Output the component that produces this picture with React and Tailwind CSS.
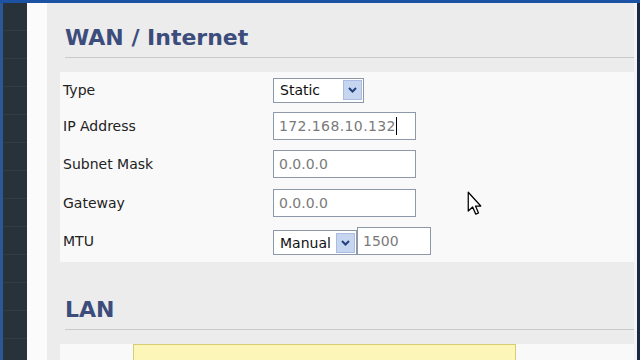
import React from 'react';

const font = { fontFamily: '"DejaVu Sans", Verdana, sans-serif' };

function Chevron() {
  return (
    <svg width="9" height="6" viewBox="0 0 9 6" fill="none">
      <path d="M1 1 L4.5 4.5 L8 1" stroke="#23407e" strokeWidth="2" />
    </svg>
  );
}

function Select({ value, width }) {
  return (
    <div className={`flex items-center h-[25px] bg-white border border-[#8d99a8] ${width}`}>
      <span className="flex-1 pl-[6px] text-[14px] text-[#111] leading-none">{value}</span>
      <span className="mr-[1px] w-[19px] h-[20px] flex items-center justify-center bg-[#c6d6f1] border border-[#a9bde2]">
        <Chevron />
      </span>
    </div>
  );
}

function TextInput({ value, width = 'w-[143px]', caret = false, wide = false }) {
  return (
    <div className={`flex items-center h-[28px] bg-white border border-[#8d99a8] ${width}`}>
      <span className={`pl-[5px] text-[14px] text-[#7a7a7a] leading-none ${wide ? 'tracking-[0.4px]' : ''}`}>{value}</span>
      {caret && <span className="w-px h-[18px] bg-black" />}
    </div>
  );
}

function Row({ label, h, children }) {
  return (
    <div className={`flex items-center ${h}`}>
      <div className="w-[210px] text-[14px] text-[#222]">{label}</div>
      {children}
    </div>
  );
}

function Heading({ children }) {
  return (
    <div className="ml-[5px] pb-[6px] border-b border-[#c9c9c9]">
      <h1 className="h-[26px] leading-[26px] text-[22px] font-bold text-[#3c4d7c]">{children}</h1>
    </div>
  );
}

export default function App() {
  return (
    <div className="relative w-[640px] h-[360px] overflow-hidden flex flex-col bg-[#1b2a44]" style={font}>
      <div className="h-[3px] bg-[#1c52a3]" />
      <div className="flex flex-1 min-h-0">
        {/* dark side strip */}
        <div className="w-[27px] bg-[#27323b] border-l-[3px] border-[#2b5797] flex flex-col">
          {Array.from({ length: 13 }).map((_, i) => (
            <div key={i} className="h-[28px] shrink-0 border-b border-[#313d46]" />
          ))}
        </div>
        <div className="w-[20px] bg-[#fbfbfb]" />

        {/* main panel */}
        <div className="flex-1 bg-[#ececec] pl-[13px] pt-[22px]">
          <Heading>WAN / Internet</Heading>

          <div className="mt-[14px] bg-[#f9f9f9] pl-[3px] pb-[2px]">
            <Row label="Type" h="h-[36px]">
              <Select value="Static" width="w-[91px]" />
            </Row>
            <Row label="IP Address" h="h-[36px]">
              <TextInput value="172.168.10.132" caret wide />
            </Row>
            <Row label="Subnet Mask" h="h-[40px]">
              <TextInput value="0.0.0.0" />
            </Row>
            <Row label="Gateway" h="h-[38px]">
              <TextInput value="0.0.0.0" />
            </Row>
            <Row label="MTU" h="h-[38px]">
              <div className="flex items-end">
                <Select value="Manual" width="w-[84px]" />
                <TextInput value="1500" width="w-[74px]" />
              </div>
            </Row>
          </div>

          <div className="mt-[35px]">
            <Heading>LAN</Heading>
          </div>

          <div className="mt-[14px] h-[40px] bg-[#f9f9f9]">
            <div className="ml-[73px] w-[383px] h-full bg-[#fcf6b9] border border-[#d9cd72]" />
          </div>
        </div>

        <div className="w-[3px] bg-[#f4f4f4]" />
        <div className="w-[3px] bg-[#1b2a44]" />
      </div>

      {/* mouse pointer */}
      <svg className="absolute left-[467px] top-[191px]" width="15" height="25" viewBox="0 0 12 20">
        <path d="M1 1 L1 16 L4.5 12.8 L7 18.5 L9.2 17.6 L6.8 12 L11 12 Z" fill="white" stroke="black" strokeWidth="1" strokeLinejoin="round" />
      </svg>
    </div>
  );
}
